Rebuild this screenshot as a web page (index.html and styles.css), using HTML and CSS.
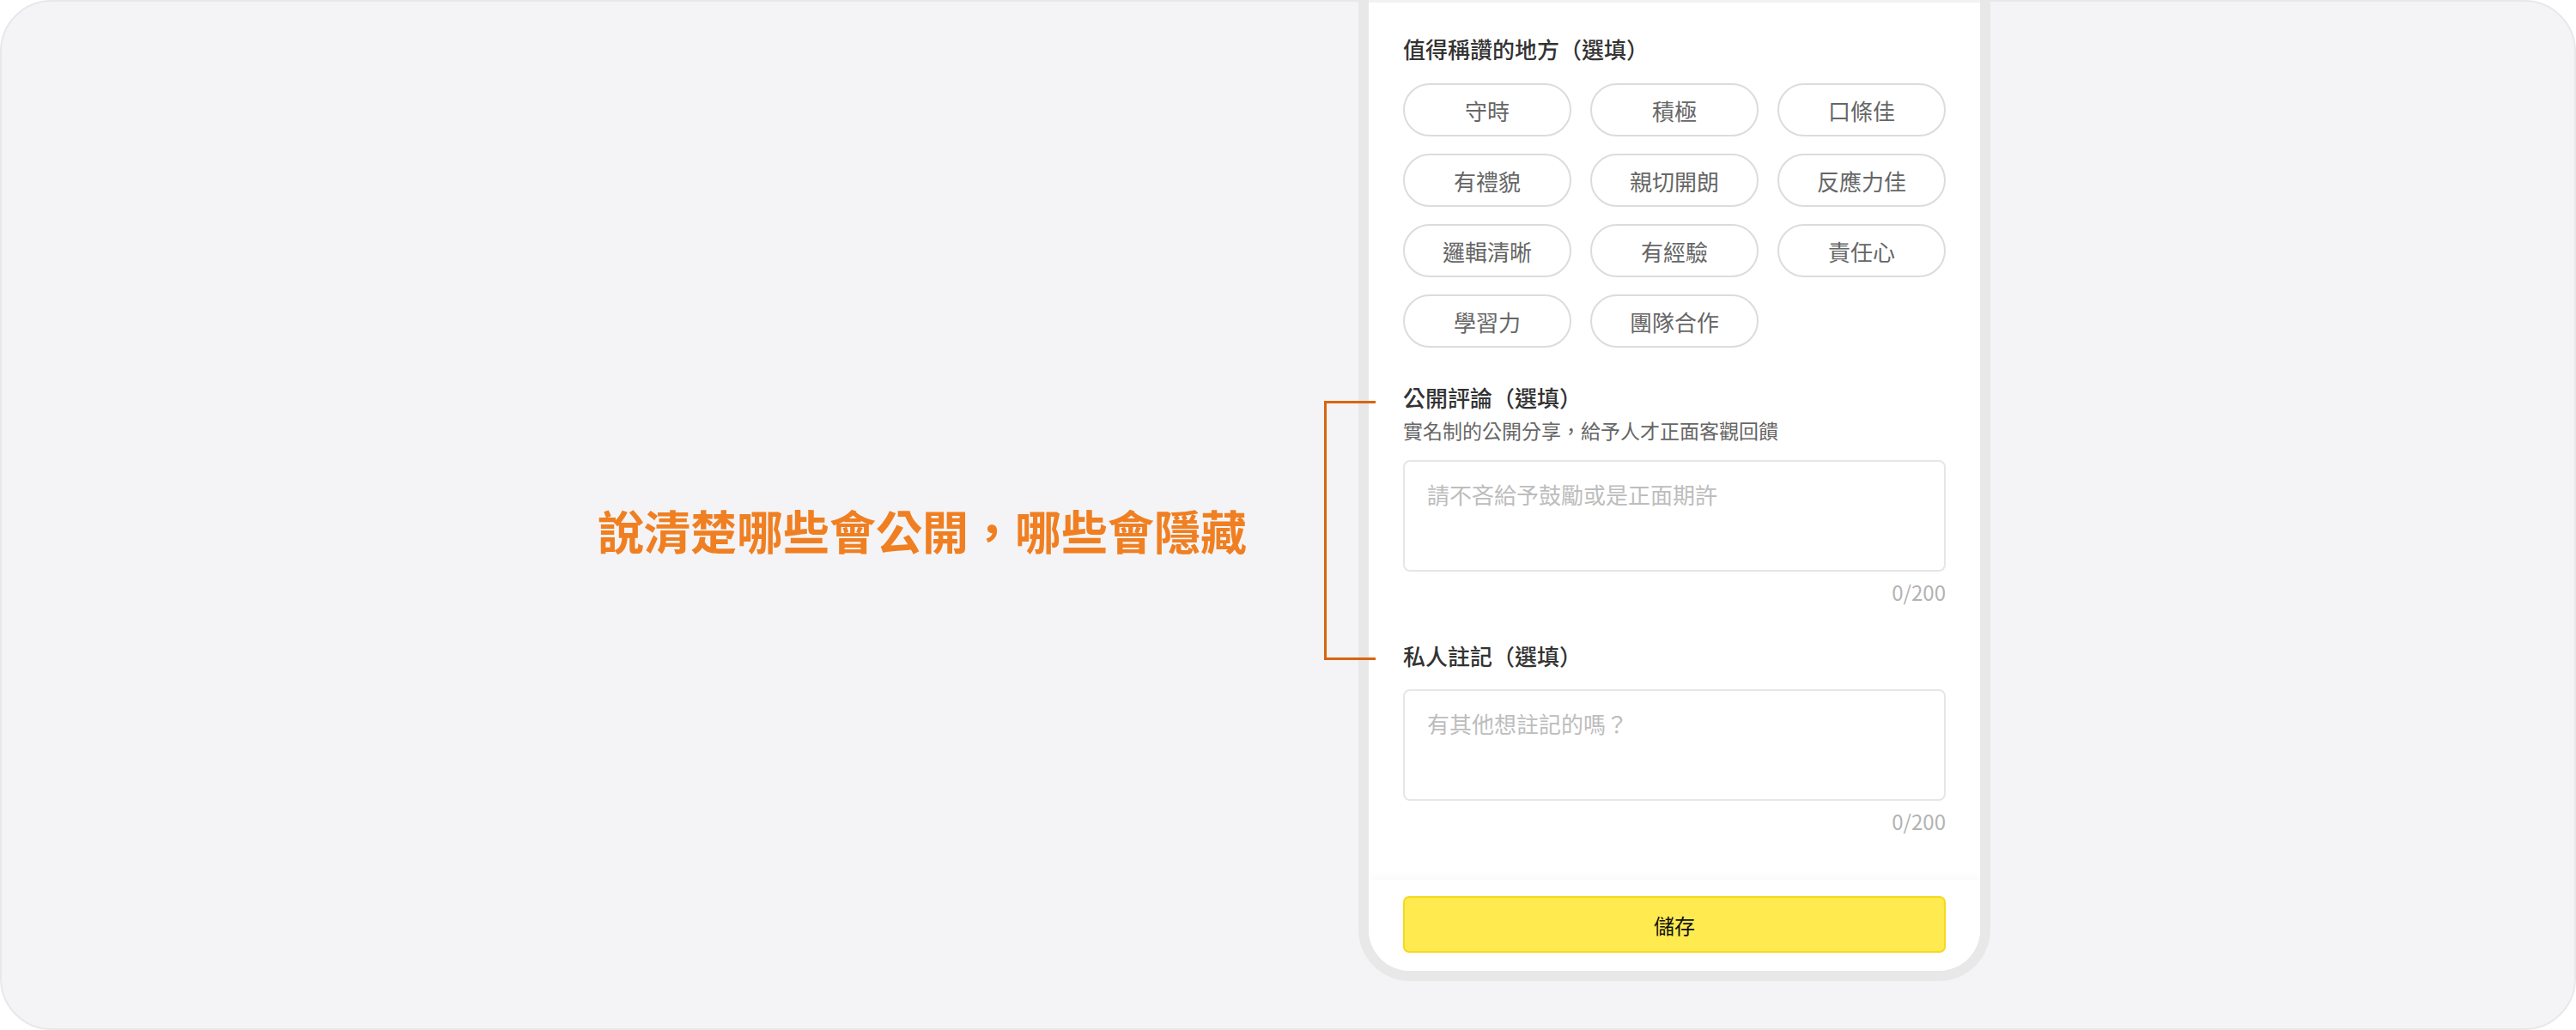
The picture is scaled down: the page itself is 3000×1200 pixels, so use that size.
FILE: index.html
```html
<!DOCTYPE html>
<html lang="zh-Hant">
<head>
<meta charset="utf-8">
<title>評論表單說明</title>
<link rel="stylesheet" href="styles.css">
</head>
<body>
<div class="canvas">
  <div class="annotation">
    <div class="headline">說清楚哪些會公開，哪些會隱藏</div>
    <div class="bracket"></div>
  </div>
  <div class="phone">
    <div class="screen">
      <div class="content">
        <div class="section-title">值得稱讚的地方（選填）</div>
        <div class="pills">
          <div class="pill">守時</div>
          <div class="pill">積極</div>
          <div class="pill">口條佳</div>
          <div class="pill">有禮貌</div>
          <div class="pill">親切開朗</div>
          <div class="pill">反應力佳</div>
          <div class="pill">邏輯清晰</div>
          <div class="pill">有經驗</div>
          <div class="pill">責任心</div>
          <div class="pill">學習力</div>
          <div class="pill">團隊合作</div>
        </div>

        <div class="section-title sec-gap">公開評論（選填）</div>
        <div class="subtitle">實名制的公開分享，給予人才正面客觀回饋</div>
        <textarea class="field field-a" placeholder="請不吝給予鼓勵或是正面期許"></textarea>
        <div class="counter">0/200</div>

        <div class="section-title sec-gap">私人註記（選填）</div>
        <textarea class="field field-b" placeholder="有其他想註記的嗎？"></textarea>
        <div class="counter">0/200</div>
      </div>
      <div class="footer">
        <div class="save-btn">儲存</div>
      </div>
    </div>
  </div>
</div>
</body>
</html>
```

FILE: styles.css
```css
* {
  box-sizing: border-box;
}

html, body {
  margin: 0;
  padding: 0;
  background: #ffffff;
}

body {
  font-family: "Noto Sans CJK TC", "Noto Sans", sans-serif;
  width: 3000px;
  height: 1200px;
  overflow: hidden;
}

.canvas {
  width: 3000px;
  height: 1200px;
  border: 2px solid #e8e8ea;
  border-radius: 60px;
  background: #f4f4f6;
  display: flex;
  align-items: flex-start;
}

/* annotation on the left */
.annotation {
  display: flex;
  align-items: center;
  margin-left: 694px;
  margin-top: 465px;
  position: relative;
  z-index: 2;
}

.headline {
  font-size: 54px;
  line-height: 64px;
  font-weight: 700;
  color: #f07f22;
  white-space: nowrap;
  width: 756px;
}

.bracket {
  width: 60px;
  height: 302px;
  margin-left: 90px;
  margin-right: -20px;
  border: 3px solid #d9650f;
  border-right: none;
}

/* phone */
.phone {
  width: 736px;
  height: 1143px;
  margin-top: -2px;
  border: 12px solid #e8e8e8;
  border-top: none;
  border-radius: 0 0 60px 60px;
  background: #e8e8e8;
  flex-shrink: 0;
}

.screen {
  height: 100%;
  background: #ffffff;
  border-top: 3px solid #f2f2f3;
  border-radius: 0 0 48px 48px;
  display: flex;
  flex-direction: column;
  overflow: hidden;
}

.content {
  flex: 1;
  padding: 36px 40px 0;
}

.section-title {
  font-size: 26px;
  line-height: 36px;
  font-weight: 500;
  color: #333333;
}

.sec-gap {
  margin-top: 40px;
}

.pills {
  display: grid;
  grid-template-columns: repeat(3, 1fr);
  column-gap: 22px;
  row-gap: 20px;
  margin-top: 22px;
}

.pill {
  height: 62px;
  border: 2px solid #dcdcdc;
  border-radius: 31px;
  display: flex;
  align-items: center;
  justify-content: center;
  font-size: 26px;
  color: #666666;
}

.subtitle {
  margin-top: 3px;
  font-size: 23px;
  line-height: 34px;
  color: #666666;
}

.field {
  display: block;
  width: 100%;
  height: 130px;
  border: 2px solid #e6e6e6;
  border-radius: 8px;
  padding: 20px 26px;
  font-family: "Noto Sans CJK TC", "Noto Sans", sans-serif;
  font-size: 26px;
  line-height: 36px;
  color: #333333;
  resize: none;
  outline: none;
  background: #ffffff;
  margin: 0;
}

.field::placeholder {
  color: #bdbdbd;
}

.field-a {
  margin-top: 18px;
}

.field-b {
  margin-top: 21px;
}

.counter {
  margin-top: 8px;
  text-align: right;
  font-size: 24px;
  line-height: 32px;
  color: #b3b3b3;
}

.footer {
  padding: 19px 40px 21px;
  box-shadow: 0 -5px 10px rgba(0, 0, 0, 0.025);
  background: #ffffff;
}

.save-btn {
  height: 66px;
  border: 2px solid #f6d81d;
  border-radius: 7px;
  background: #ffea4f;
  display: flex;
  align-items: center;
  justify-content: center;
  font-size: 24px;
  color: #111111;
}
```
